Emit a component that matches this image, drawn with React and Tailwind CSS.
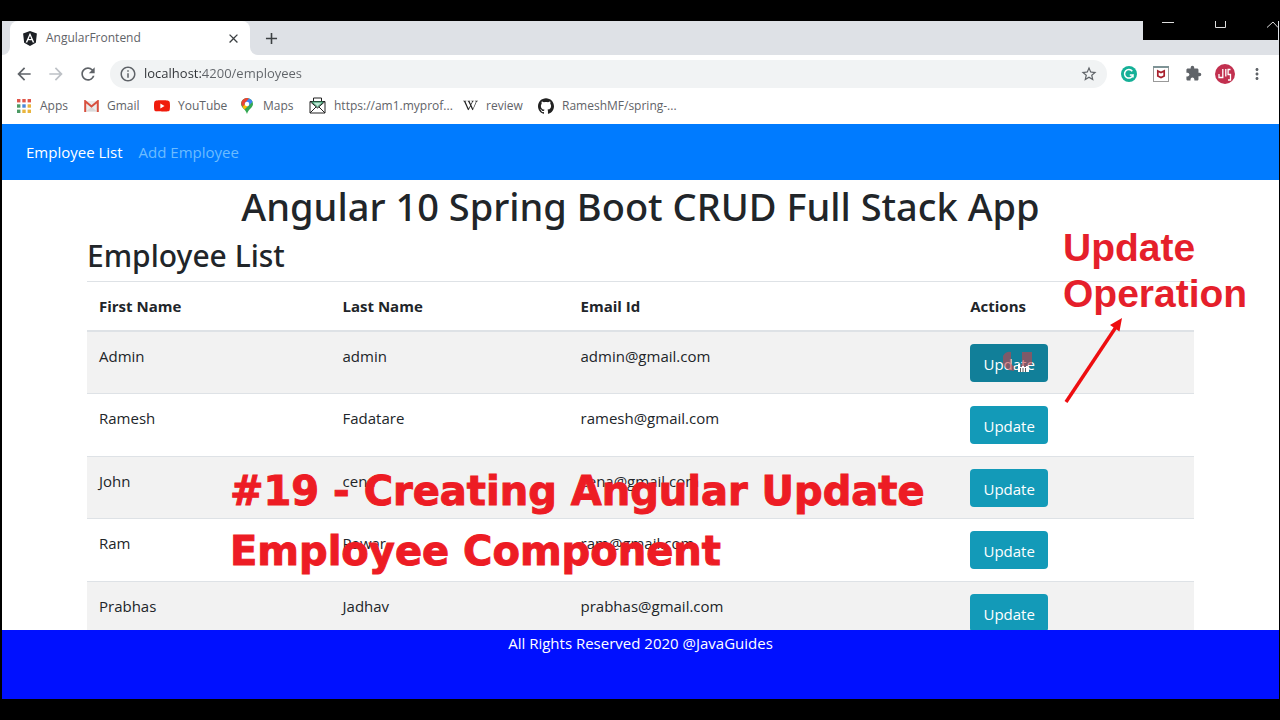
import { FaAngular } from 'react-icons/fa';
import { SiGithub, SiWikipedia, SiYoutube } from 'react-icons/si';
import { MdArrowBack, MdArrowForward, MdClose, MdExtension, MdInfoOutline, MdMoreVert, MdRefresh, MdStarBorder, MdAdd } from 'react-icons/md';

const employees = [
    { firstName: 'Admin', lastName: 'admin', email: 'admin@gmail.com' },
    { firstName: 'Ramesh', lastName: 'Fadatare', email: 'ramesh@gmail.com' },
    { firstName: 'John', lastName: 'cena', email: 'cena@gmail.com' },
    { firstName: 'Ram', lastName: 'Pawar', email: 'ram@gmail.com' },
    { firstName: 'Prabhas', lastName: 'Jadhav', email: 'prabhas@gmail.com' },
];

const AppsIcon = () => (
    <svg viewBox="0 0 14 14" className="h-[14px] w-[14px]">
        <g fill="#e0574b"><rect width="3.4" height="3.4" /><rect x="5.3" width="3.4" height="3.4" /><rect x="10.6" width="3.4" height="3.4" /></g>
        <rect y="5.3" width="3.4" height="3.4" fill="#4c9a63" />
        <rect x="5.3" y="5.3" width="3.4" height="3.4" fill="#4a86d8" />
        <rect x="10.6" y="5.3" width="3.4" height="3.4" fill="#e9b43c" />
        <rect y="10.6" width="3.4" height="3.4" fill="#4c9a63" />
        <g fill="#e9b43c"><rect x="5.3" y="10.6" width="3.4" height="3.4" /><rect x="10.6" y="10.6" width="3.4" height="3.4" /></g>
    </svg>
);

const GmailIcon = () => (
    <svg viewBox="0 0 15 12" className="h-3 w-[15px]">
        <rect x="1" y="1" width="13" height="10.5" fill="#ececec" />
        <path d="M2 11.5 7.5 7l5.5 4.500z" fill="#d9d9d9" />
        <path d="M1.200 12V1.200L7.500 6.500l6.300-5.300V12" fill="none" stroke="#d8503f" strokeWidth="2" />
    </svg>
);

const MapsIcon = () => (
    <svg viewBox="0 0 12 16" className="h-4 w-3">
        <path d="M6 0a6 6 0 0 0-6 6c0 3.500 4.500 5 6 10 1.500-5 6-6.500 6-10a6 6 0 0 0-6-6z" fill="#34a853" />
        <path d="M1.400 2.200A6 6 0 0 1 8 .4L2 8.800C.5 7.500-.8 4.800 1.400 2.200z" fill="#ea4335" />
        <path d="M8 .4a6 6 0 0 1 3.600 3.400L6 9.500 3.500 5.500z" fill="#4285f4" />
        <path d="M1.500 9 6 4l2 3-4.500 4.500z" fill="#fbbc04" />
        <circle cx="6" cy="6" r="2.200" fill="#fff" />
    </svg>
);

const MailIcon = () => (
    <svg viewBox="0 0 17 17" className="h-[17px] w-[17px]" fill="none" stroke="#222" strokeWidth="1">
        <path d="M4.500 4V1h8v3" />
        <path d="M1 4.500h15v11.500H1z" fill="#fff" />
        <path d="m3 5 5.500 5L14 5z" fill="#bfe9d5" stroke="#2c8a5f" />
        <path d="m1 4.500 7.500 6.500L16 4.500M1 16l6-6M16 16l-6-6" />
    </svg>
);

const bookmarks = [
    { label: 'Apps', icon: <AppsIcon />, style: 'w-[67px] gap-[9px]' },
    { label: 'Gmail', icon: <GmailIcon />, style: 'w-[70px] gap-2' },
    { label: 'YouTube', icon: <SiYoutube className="h-4 w-4 text-[#f01c0c]" />, style: 'w-[87px] gap-2' },
    { label: 'Maps', icon: <MapsIcon />, style: 'w-[68px] gap-[10px]' },
    { label: 'https://am1.myprof...', icon: <MailIcon />, style: 'w-[154px] gap-2' },
    { label: 'review', icon: <SiWikipedia className="h-[15px] w-[15px] text-[#222]" />, style: 'w-[75px] gap-2' },
    { label: 'RameshMF/spring-...', icon: <SiGithub className="h-4 w-4 text-[#222]" />, style: 'w-[150px] gap-2' },
];

const TabStrip = () => (
    <div className="flex h-[34px] bg-[#dee1e6]">
        <div className="w-2 bg-white">
            <div className="h-full rounded-br-lg bg-[#dee1e6]" />
        </div>
        <div className="flex w-[240px] items-center rounded-t-lg bg-white pr-[9px] pl-3 text-[12px] text-[#5f6368]">
            <FaAngular className="h-[17px] w-4 text-[#1c1f24]" />
            <span className="ml-2 flex-1">AngularFrontend</span>
            <button type="button" aria-label="Close tab"><MdClose className="h-[15px] w-[15px] text-[#3c4043]" /></button>
        </div>
        <div className="bg-white">
            <button type="button" aria-label="New tab" className="flex h-full w-[42px] items-center justify-center rounded-bl-lg bg-[#dee1e6]">
                <MdAdd className="h-[19px] w-[19px] text-[#3c4043]" />
            </button>
        </div>
    </div>
);

const Toolbar = () => (
    <div className="flex h-9 items-center bg-white pt-px pr-[6px] pl-3 text-[#5f6368]">
        <button type="button" aria-label="Back" className="w-8"><MdArrowBack className="h-5 w-5" /></button>
        <button type="button" aria-label="Forward" className="w-8"><MdArrowForward className="h-5 w-5 text-[#bdc1c6]" /></button>
        <button type="button" aria-label="Reload" className="w-8"><MdRefresh className="h-5 w-5" /></button>
        <div className="flex h-[28px] flex-1 items-center rounded-full bg-[#f1f3f4] px-[9px]">
            <MdInfoOutline className="h-[18px] w-[18px]" />
            <input
                type="text"
                aria-label="Address"
                defaultValue="localhost:4200/employees"
                className="ml-[7px] flex-1 bg-[linear-gradient(90deg,#2f3236_57px,#5f6368_57px)] bg-clip-text pt-px text-[13px] text-transparent outline-none"
            />
            <button type="button" aria-label="Bookmark this page"><MdStarBorder className="h-[18px] w-[18px]" /></button>
        </div>
        <div className="grid grid-cols-[repeat(5,32px)] place-items-center pl-[6px]">
            <svg viewBox="0 0 16 16" className="h-4 w-4">
                <circle cx="8" cy="8" r="8" fill="#15b097" />
                <path d="M11.300 5.200A4.300 4.300 0 1 0 12 9H8.800M12 9v2.500" fill="none" stroke="#fff" strokeWidth="1.500" />
            </svg>
            <svg viewBox="0 0 16 16" className="h-4 w-4">
                <rect x=".5" y=".5" width="15" height="15" fill="#fff" stroke="#999" />
                <path d="M0 0h16v2H0z" fill="#7e9396" />
                <path d="m4.800 5 3.200 1.600L11.200 5v5L8 11.600 4.800 10z" fill="none" stroke="#a8202c" strokeWidth="1.700" />
            </svg>
            <MdExtension className="h-[17px] w-[17px]" />
            <svg viewBox="0 0 20 20" className="h-5 w-5">
                <circle cx="10" cy="10" r="10" fill="#c2304f" />
                <path d="M4 10v3.500h3.800V5M10.800 5v7.500M15.500 5.500h-2.400v5h2.400v5.500h-2.500" fill="none" stroke="#fff" strokeWidth="1.300" />
            </svg>
            <button type="button" aria-label="Menu"><MdMoreVert className="h-[18px] w-[18px]" /></button>
        </div>
    </div>
);

const Bookmarks = () => (
    <nav aria-label="Bookmarks" className="flex h-[33px] items-center overflow-hidden bg-white pb-1 pl-[15px] text-[12px] text-[#5f6368]">
        {bookmarks.map((b) => (
            <a key={b.label} href="#" className={`flex shrink-0 items-center whitespace-nowrap ${b.style}`}>
                {b.icon}
                {b.label}
            </a>
        ))}
    </nav>
);

const ClickMark = () => (
    <svg viewBox="0 0 34 24" className="pointer-events-none absolute top-[7px] left-[32px] h-6 w-[34px]">
        <g fill="#c8414a" opacity=".6">
            <path d="M1 5q3-5 8-4v10q0 3 3 4v5Q2 19 1 12z" />
            <path d="M20 1h10v13h-4v3h-7v-4h1z" />
        </g>
        <path d="M16 21v-8h2v3h2v-1h2v1h2v-1h2v1h1v5z" fill="#fff" />
        <path d="M18.500 17v4M21 17v4M23.500 17v4" stroke="#333" strokeWidth=".8" />
    </svg>
);

const EmployeeTable = () => (
    <table className="w-full table-fixed border-collapse text-left text-[15px] leading-6">
        <thead>
            <tr className="h-[49px] border-t border-b-2 border-[#dee2e6]">
                <th className="w-[22%] px-3">First Name</th>
                <th className="w-[21.500%] px-3">Last Name</th>
                <th className="w-[35.200%] px-3">Email Id</th>
                <th className="px-3">Actions</th>
            </tr>
        </thead>
        <tbody>
            {employees.map((e, i) => (
                <tr key={e.email} className="border-t border-[#dee2e6] odd:bg-[#f2f2f2]">
                    <td className="px-3 pt-3 align-top">{e.firstName}</td>
                    <td className="px-3 pt-3 align-top">{e.lastName}</td>
                    <td className="px-3 pt-3 align-top">{e.email}</td>
                    <td className={`px-3 pt-3 ${i % 2 === 0 ? 'pb-[11px]' : 'pb-3'}`}>
                        <div className="relative flex">
                            <button type="button" className={`h-[38px] w-[78px] rounded pt-[2px] text-[15px] text-white ${i === 0 ? 'bg-[#117f99]' : 'bg-[#139ab8]'}`}>
                                Update
                            </button>
                            {i === 0 && <ClickMark />}
                        </div>
                    </td>
                </tr>
            ))}
        </tbody>
    </table>
);

const App = () => {
    return (
        <div className="relative flex h-screen flex-col overflow-hidden bg-black py-[21px] pr-px pl-[2px] font-['Open_Sans','Noto_Sans',sans-serif] text-[#212529]">
            <TabStrip />
            <Toolbar />
            <Bookmarks />

            <nav className="flex h-14 shrink-0 items-center gap-4 bg-[#007bff] px-6 text-[15px]">
                <a href="#" className="text-white">Employee List</a>
                <a href="#" className="text-[#6cbcff]">Add Employee</a>
            </nav>

            <main className="min-h-0 flex-1 overflow-hidden bg-white">
                <h1 className="pt-[2px] text-center font-['Noto_Sans',sans-serif] text-[38px] leading-[48px] font-medium">Angular 10 Spring Boot CRUD Full Stack App</h1>
                <div className="mx-[85px]">
                    <h2 className="mb-[6px] pt-[7px] font-['Noto_Sans',sans-serif] text-[30px] leading-[38px] font-medium">Employee List</h2>
                    <EmployeeTable />
                </div>
            </main>

            <footer className="h-[69px] shrink-0 bg-[#0010ff] text-center text-[15px] leading-[26px] text-white">
                All Rights Reserved 2020 @JavaGuides
            </footer>

            {/* Window caption buttons */}
            <div className="absolute top-0 right-[2px] h-10 w-[135px] bg-black">
                <svg viewBox="0 0 135 40" className="h-full w-full" fill="none" stroke="#ddd">
                    <path d="M19 22.500h12M72.500 21v6.500h10V21M124 27.500l6-5.500 5 5.500" />
                </svg>
            </div>

            {/* Video captions */}
            <p className="absolute top-[225px] left-[1063px] font-['Liberation_Sans',Arial,sans-serif] text-[39px] leading-[46px] font-bold text-[#e51f2b]">
                Update<br />Operation
            </p>
            <svg viewBox="0 0 60 90" className="absolute top-[315px] left-[1063px] h-[90px] w-[60px]">
                <path d="M3 87 53 12" stroke="#ee0d10" strokeWidth="3.500" />
                <path d="M59 3 56.500 16.500 47 10z" fill="#ee0d10" />
            </svg>
            <p className="absolute top-[461px] left-[230px] font-['DejaVu_Sans',sans-serif] text-[40px] leading-[60px] font-bold whitespace-nowrap text-[#ed1c24] [-webkit-text-stroke:1px_#ed1c24]">
                #19 - Creating Angular Update<br />Employee Component
            </p>
        </div>
    );
};

export default App;
